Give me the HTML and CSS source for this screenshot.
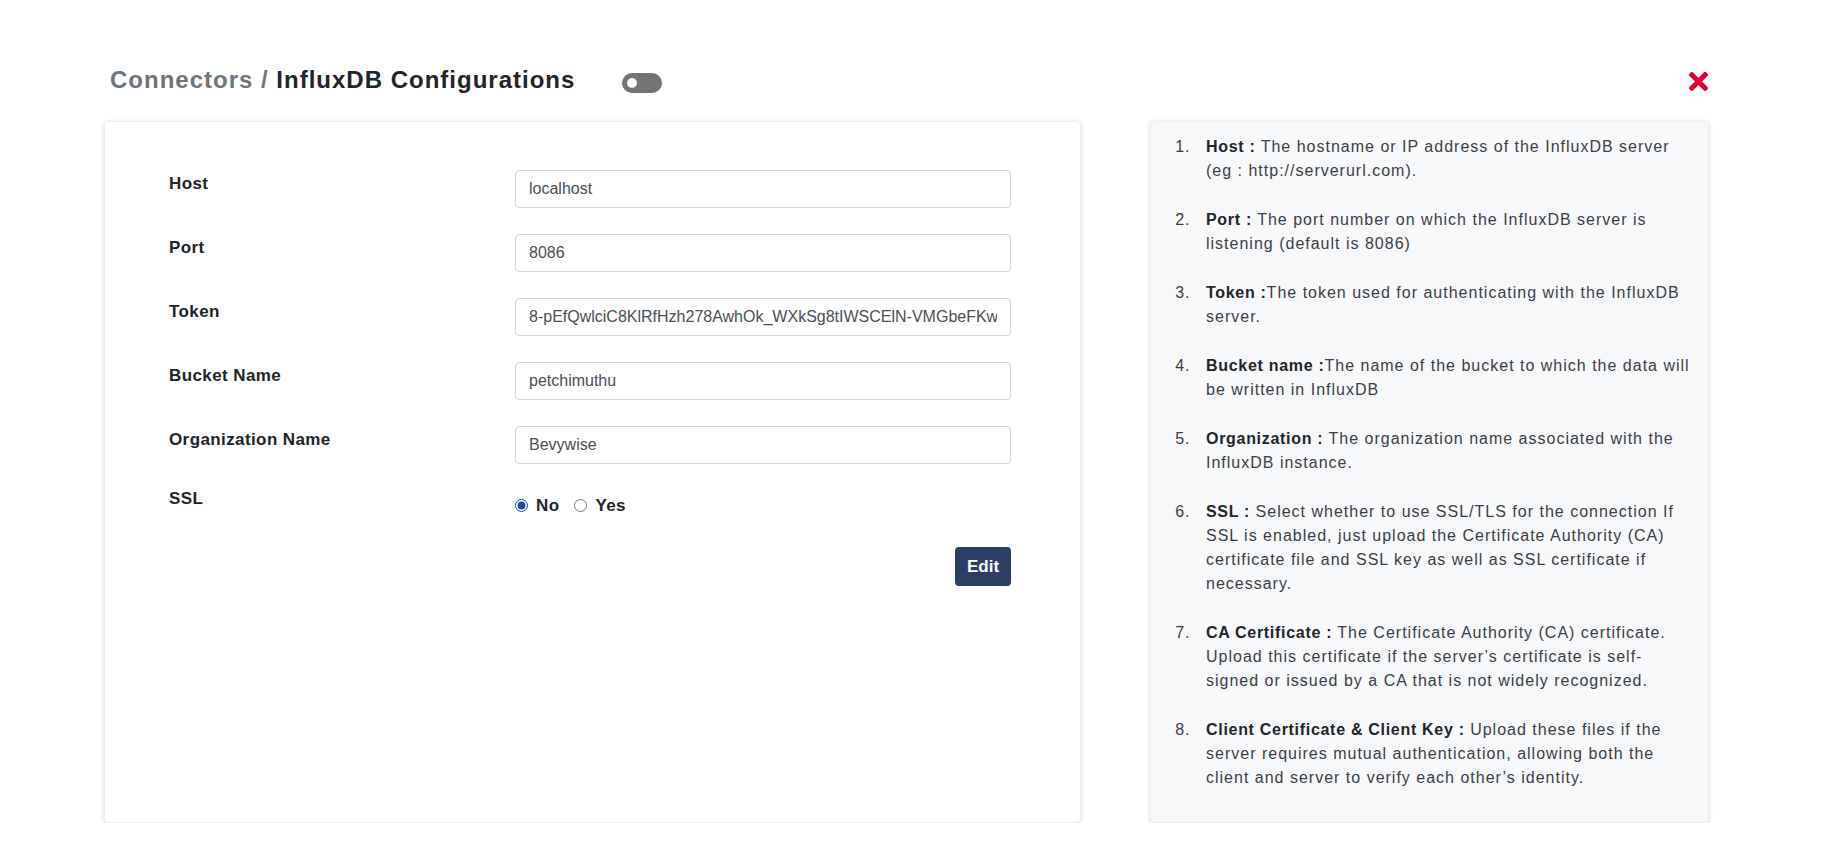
FILE: index.html
```html
<!DOCTYPE html>
<html lang="en">
<head>
<meta charset="utf-8">
<title>InfluxDB Configurations</title>
<link rel="stylesheet" href="styles.css">
</head>
<body>
<div class="page">
  <header class="header">
    <h1 class="title"><span class="crumb">Connectors /</span> InfluxDB Configurations</h1>
    <span class="switch"><span class="knob"></span></span>
    <button class="close" type="button" aria-label="Close">
      <svg viewBox="0 80 352 352" width="19" height="19" aria-hidden="true"><path fill="#e5002d" d="M242.72 256l100.07-100.07c12.28-12.28 12.28-32.19 0-44.48l-22.24-22.24c-12.28-12.28-32.19-12.28-44.48 0L176 189.28 75.930 89.21c-12.28-12.28-32.19-12.28-44.48 0L9.21 111.45c-12.28 12.28-12.28 32.19 0 44.48L109.28 256 9.21 356.07c-12.28 12.28-12.28 32.19 0 44.48l22.24 22.24c12.28 12.28 32.2 12.28 44.48 0L176 322.72l100.07 100.07c12.28 12.28 32.2 12.280 44.48 0l22.240-22.24c12.28-12.28 12.28-32.19 0-44.48L242.72 256z"/></svg>
    </button>
  </header>

  <main class="cards">
    <section class="card form-card">
      <div class="field">
        <label class="label">Host</label>
        <input class="input" type="text" value="localhost">
      </div>
      <div class="field">
        <label class="label">Port</label>
        <input class="input" type="text" value="8086">
      </div>
      <div class="field">
        <label class="label">Token</label>
        <input class="input" type="text" value="8-pEfQwlciC8KlRfHzh278AwhOk_WXkSg8tIWSCElN-VMGbeFKw">
      </div>
      <div class="field">
        <label class="label">Bucket Name</label>
        <input class="input" type="text" value="petchimuthu">
      </div>
      <div class="field">
        <label class="label">Organization Name</label>
        <input class="input" type="text" value="Bevywise">
      </div>
      <div class="field field-ssl">
        <label class="label">SSL</label>
        <div class="radios">
          <label class="radio"><input type="radio" name="ssl" checked><span>No</span></label>
          <label class="radio"><input type="radio" name="ssl"><span>Yes</span></label>
        </div>
      </div>
      <div class="field field-actions">
        <button class="btn-edit" type="button">Edit</button>
      </div>
    </section>

    <aside class="card help-card">
      <ol class="help-list">
        <li><b>Host :</b> The hostname or IP address of the InfluxDB server (eg : http://serverurl.com).</li>
        <li><b>Port :</b> The port number on which the InfluxDB server is listening (default is 8086)</li>
        <li><b>Token :</b>The token used for authenticating with the InfluxDB server.</li>
        <li><b>Bucket name :</b>The name of the bucket to which the data will be written in InfluxDB</li>
        <li><b>Organization :</b> The organization name associated with the InfluxDB instance.</li>
        <li><b>SSL :</b> Select whether to use SSL/TLS for the connection If SSL is enabled, just upload the Certificate Authority (CA) certificate file and SSL key as well as SSL certificate if necessary.</li>
        <li><b>CA Certificate :</b> The Certificate Authority (CA) certificate. Upload this certificate if the server’s certificate is self-signed or issued by a CA that is not widely recognized.</li>
        <li><b>Client Certificate &amp; Client Key :</b> Upload these files if the server requires mutual authentication, allowing both the client and server to verify each other’s identity.</li>
      </ol>
    </aside>
  </main>
</div>
</body>
</html>
```

FILE: styles.css
```css
* { box-sizing: border-box; }

html, body {
  margin: 0;
  background: #ffffff;
}

body {
  font-family: "Liberation Sans", Arial, sans-serif;
  color: #212529;
}

.page {
  padding: 62px 132px 0 104px;
}

.header {
  display: flex;
  align-items: center;
  height: 36px;
  margin-bottom: 23px;
}

.title {
  margin: 0 0 0 6px;
  font-size: 24px;
  font-weight: 700;
  letter-spacing: 1px;
  color: #212529;
  line-height: 36px;
}

.crumb {
  color: #6c757d;
}

.switch {
  margin-left: 47px;
  margin-top: 6px;
  width: 40px;
  height: 20px;
  border-radius: 10px;
  background: #737373;
  display: flex;
  align-items: center;
  padding-left: 5px;
}

.knob {
  width: 10px;
  height: 10px;
  border-radius: 50%;
  background: #ffffff;
}

.close {
  margin-left: auto;
  margin-right: 1px;
  margin-top: 3px;
  padding: 0;
  border: 0;
  background: transparent;
  width: 19px;
  height: 19px;
  display: flex;
}

.cards {
  display: grid;
  grid-template-columns: 977px 559px;
  column-gap: 69px;
  height: 702px;
}

.card {
  border-radius: 4px;
  box-shadow: 0 1px 4px rgba(0, 0, 0, 0.16);
  border: 1px solid #eceef0;
}

.form-card {
  background: #ffffff;
  padding: 48px 70px 0 64px;
  display: flex;
  flex-direction: column;
  gap: 26px;
}

.field {
  display: grid;
  grid-template-columns: 346px 496px;
  align-items: start;
}

.label {
  padding-top: 2px;
  font-size: 17px;
  line-height: 24px;
  font-weight: 700;
  letter-spacing: 0.4px;
  color: #212529;
}

.input {
  height: 38px;
  width: 100%;
  border: 1px solid #ced4da;
  border-radius: 4px;
  padding: 0 13px;
  font-family: "Liberation Sans", Arial, sans-serif;
  font-size: 16px;
  color: #495057;
  background: #ffffff;
  outline: none;
}

.field-ssl {
  margin-top: -5px;
}

.radios {
  display: flex;
  align-items: center;
  padding-top: 8px;
  height: 33px;
}

.radio {
  display: flex;
  align-items: center;
  font-size: 17px;
  font-weight: 700;
  letter-spacing: 0.4px;
  line-height: 24px;
  color: #212529;
}

.radio + .radio {
  margin-left: 15px;
}

.radio input {
  margin: 0 8px 0 0;
  width: 13px;
  height: 13px;
  accent-color: #1b4a9e;
}

.field-actions {
  margin-top: 3px;
}

.btn-edit {
  grid-column: 2;
  justify-self: end;
  width: 56px;
  height: 39px;
  border: 0;
  border-radius: 4px;
  background: #2c3e63;
  color: #ffffff;
  font-family: "Liberation Sans", Arial, sans-serif;
  font-size: 17px;
  font-weight: 700;
  padding: 0;
}

.help-card {
  background: #f7f8fa;
  padding: 13px 15px 0 0;
}

.help-list {
  margin: 0;
  padding-left: 45px;
  font-size: 16px;
  line-height: 24px;
  letter-spacing: 1px;
  color: #3a3f45;
}

.help-list li {
  padding-left: 10px;
  margin-bottom: 25px;
}

.help-list b {
  color: #212529;
  letter-spacing: 0.7px;
}
```
